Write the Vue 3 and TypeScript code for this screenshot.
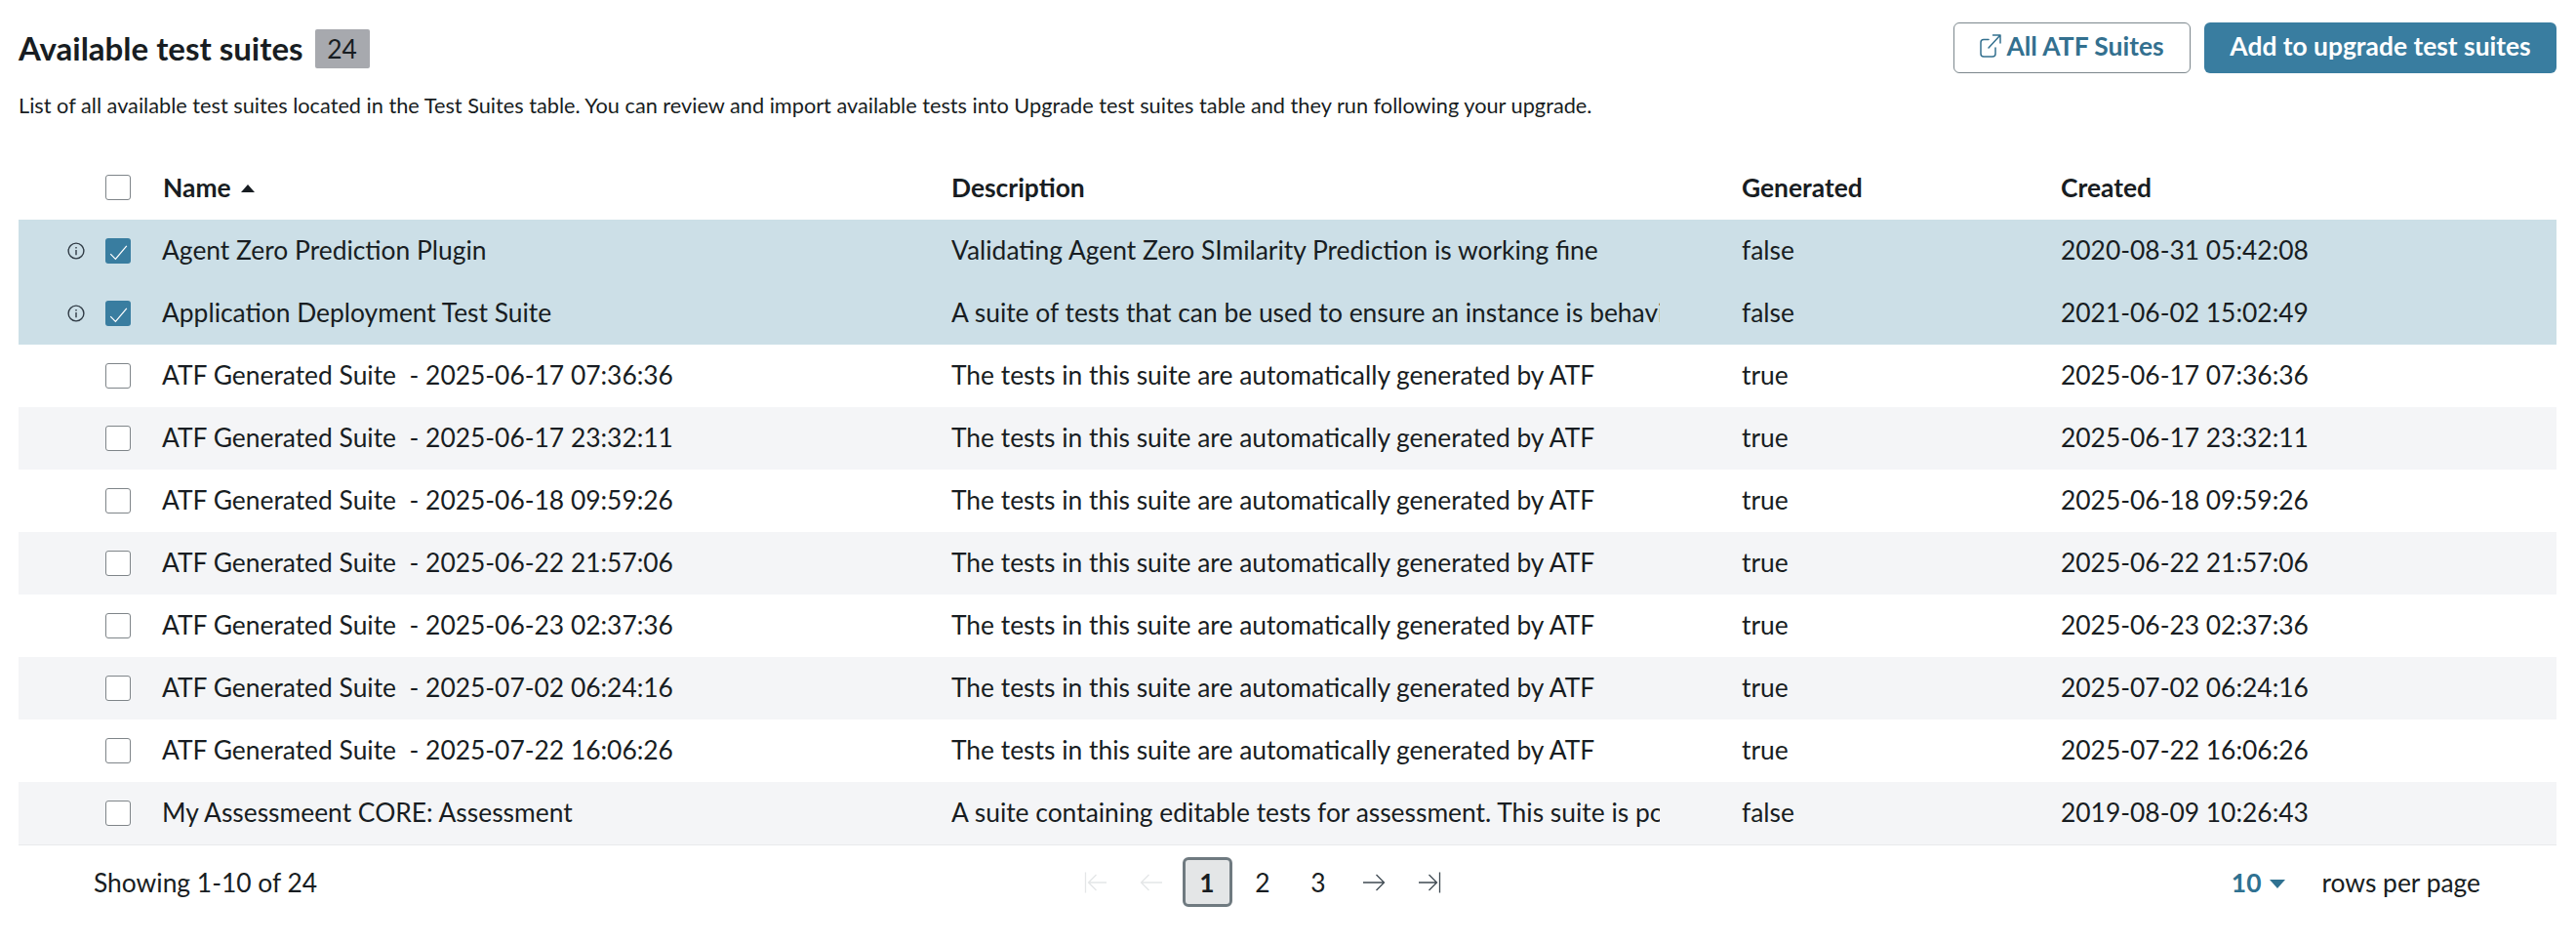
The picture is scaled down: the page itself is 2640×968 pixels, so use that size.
<script setup lang="ts">
interface Suite {
  name: string
  description: string
  generated: string
  created: string
  selected?: boolean
}

const atf = 'The tests in this suite are automatically generated by ATF'
const atfDates = [
  '2025-06-17 07:36:36',
  '2025-06-17 23:32:11',
  '2025-06-18 09:59:26',
  '2025-06-22 21:57:06',
  '2025-06-23 02:37:36',
  '2025-07-02 06:24:16',
  '2025-07-22 16:06:26',
]

const suites: Suite[] = [
  {
    name: 'Agent Zero Prediction Plugin',
    description: 'Validating Agent Zero SImilarity Prediction is working fine',
    generated: 'false',
    created: '2020-08-31 05:42:08',
    selected: true,
  },
  {
    name: 'Application Deployment Test Suite',
    description: 'A suite of tests that can be used to ensure an instance is behaving as expected',
    generated: 'false',
    created: '2021-06-02 15:02:49',
    selected: true,
  },
  ...atfDates.map((d) => ({
    name: `ATF Generated Suite\u00a0 - ${d}`,
    description: atf,
    generated: 'true',
    created: d,
  })),
  {
    name: 'My Assessmeent CORE: Assessment',
    description: 'A suite containing editable tests for assessment. This suite is powered by CORE',
    generated: 'false',
    created: '2019-08-09 10:26:43',
  },
]
</script>

<template>
  <div class="page">
    <header class="top">
      <div class="heading">
        <h1>Available test suites</h1>
        <span class="count">24</span>
      </div>
      <div class="actions">
        <button class="btn btn-outline">
          <svg width="22" height="24" viewBox="0 0 22 24" fill="none" stroke="currentColor" stroke-width="1.500" stroke-linecap="round" stroke-linejoin="round">
            <path d="M9 5.500H4a3 3 0 0 0-3 3V20a3 3 0 0 0 3 3h9a3 3 0 0 0 3-3v-6" />
            <path d="M9 14 20.500 1.500M13.500 1H21v8" />
          </svg>
          All ATF Suites
        </button>
        <button class="btn btn-primary">Add to upgrade test suites</button>
      </div>
    </header>

    <p class="intro">
      List of all available test suites located in the Test Suites table. You can review and import available tests into Upgrade test suites table and they run following your upgrade.
    </p>

    <table class="grid">
      <colgroup>
        <col class="c-info" />
        <col class="c-check" />
        <col class="c-name" />
        <col class="c-desc" />
        <col class="c-gen" />
        <col />
      </colgroup>
      <thead>
        <tr>
          <th></th>
          <th><span class="check"></span></th>
          <th class="th-name">Name <span class="sort"></span></th>
          <th>Description</th>
          <th>Generated</th>
          <th>Created</th>
        </tr>
      </thead>
      <tbody>
        <tr v-for="s in suites" :key="s.name" :class="{ selected: s.selected }">
          <td class="td-info">
            <svg v-if="s.selected" width="18" height="18" viewBox="0 0 18 18" fill="none" stroke="#2f3a44" stroke-width="1.400">
              <circle cx="9" cy="9" r="7.900" />
              <path d="M9 8v5.200" />
              <path d="M9 5v1.400" />
            </svg>
          </td>
          <td class="td-check">
            <span class="check" :class="{ on: s.selected }">
              <svg v-if="s.selected" width="26" height="26" viewBox="0 0 25 25" fill="none" stroke="#fff" stroke-width="1.200">
                <path d="M5 15.500 10 20.500 21 7.500" />
              </svg>
            </span>
          </td>
          <td>{{ s.name }}</td>
          <td><div class="clip">{{ s.description }}</div></td>
          <td>{{ s.generated }}</td>
          <td>{{ s.created }}</td>
        </tr>
      </tbody>
    </table>

    <footer class="pager">
      <div class="showing">Showing 1-10 of 24</div>
      <nav class="pages">
        <button class="page-btn off">
          <svg width="24" height="24" viewBox="0 0 24 24" fill="none" stroke="currentColor" stroke-width="1.300">
            <path d="M1.500 1.500v21M23 12H4.500M12.500 4 4.500 12l8 8" />
          </svg>
        </button>
        <button class="page-btn off">
          <svg width="24" height="24" viewBox="0 0 24 24" fill="none" stroke="currentColor" stroke-width="1.300">
            <path d="M23 12H1.500M9.500 4l-8 8 8 8" />
          </svg>
        </button>
        <button class="page-btn current">1</button>
        <button class="page-btn">2</button>
        <button class="page-btn">3</button>
        <button class="page-btn">
          <svg width="24" height="24" viewBox="0 0 24 24" fill="none" stroke="currentColor" stroke-width="1.300">
            <path d="M1 12h21.500M14.500 4l8 8-8 8" />
          </svg>
        </button>
        <button class="page-btn">
          <svg width="24" height="24" viewBox="0 0 24 24" fill="none" stroke="currentColor" stroke-width="1.300">
            <path d="M1 12h18.500M11.500 4l8 8-8 8M22.500 1.500v21" />
          </svg>
        </button>
      </nav>
      <div class="per-page">
        <span class="size">10 <span class="caret"></span></span>
        <span>rows per page</span>
      </div>
    </footer>
  </div>
</template>

<style scoped>
.page {
  width: 2640px;
  height: 968px;
  box-sizing: border-box;
  padding: 23px 20px 0 19px;
  font-family: Lato, "Liberation Sans", sans-serif;
  color: #181d22;
  background: #fff;
  overflow: hidden;
}

.top {
  display: flex;
  justify-content: space-between;
  align-items: center;
  height: 52px;
}

.heading {
  display: flex;
  align-items: center;
  gap: 12px;
}

h1 {
  margin: 0;
  font-size: 33px;
  font-weight: 700;
  line-height: 40px;
}

.count {
  width: 56px;
  height: 40px;
  margin-top: 1px;
  border-radius: 2px;
  background: #a7a9ae;
  font-size: 26.400px;
  line-height: 40px;
  text-align: center;
}

.actions {
  display: flex;
  gap: 14px;
}

.btn {
  height: 52px;
  box-sizing: border-box;
  padding: 0 0 4px;
  border-radius: 6px;
  font-family: inherit;
  font-size: 26.400px;
  font-weight: 700;
  display: flex;
  align-items: center;
  justify-content: center;
}

.btn-outline {
  width: 243px;
  gap: 5px;
  border: 1px solid #7c878d;
  background: #fff;
  color: #33708f;
}

.btn-primary {
  width: 361px;
  border: 0;
  background: #397da0;
  color: #fff;
}

.intro {
  margin: 18px 0 0;
  font-size: 21.730px;
  line-height: 30px;
  white-space: nowrap;
}

.grid {
  width: 2601px;
  margin-top: 37px;
  border-collapse: collapse;
  table-layout: fixed;
  font-size: 26.400px;
}

.c-info { width: 73px; }
.c-check { width: 74px; }
.c-name { width: 809px; }
.c-desc { width: 810px; }
.c-gen { width: 327px; }

th {
  height: 65px;
  box-sizing: border-box;
  padding: 0 0 1px;
  text-align: left;
  font-weight: 700;
}

.th-name {
  padding-left: 1px;
}

.sort {
  display: inline-block;
  margin-left: 4px;
  vertical-align: 5px;
  border: 7px solid transparent;
  border-top: 0;
  border-bottom: 8px solid #181d22;
}

td {
  height: 64px;
  box-sizing: border-box;
  padding: 0 0 2px;
  white-space: nowrap;
}

td.td-check {
  padding-bottom: 0;
}

tbody tr:nth-child(even) {
  background: #f4f5f7;
}

tbody tr.selected {
  background: #ccdfe7;
}

tbody tr:last-child {
  border-bottom: 1px solid #e9eaec;
}

td.td-info {
  padding: 0 0 0 50px;
}

.td-info svg {
  display: block;
}

.check {
  display: block;
  width: 26px;
  height: 26px;
  margin-left: 16px;
  box-sizing: border-box;
  border: 1px solid #7f8589;
  border-radius: 3px;
  background: #fff;
  overflow: hidden;
}

.check.on {
  border: 0;
  background: #397da0;
}

.check svg {
  display: block;
}

.clip {
  width: 726px;
  overflow: hidden;
}

.pager {
  display: grid;
  grid-template-columns: 1078.500px auto 1fr;
  align-items: center;
  height: 76px;
  font-size: 26.400px;
}

.showing {
  padding-left: 77px;
}

.pages {
  display: flex;
  gap: 6px;
}

.page-btn {
  width: 51px;
  height: 51px;
  padding: 0;
  box-sizing: border-box;
  border: 0;
  border-radius: 6px;
  background: none;
  font-family: inherit;
  font-size: 26.400px;
  color: #181d22;
  display: flex;
  align-items: center;
  justify-content: center;
}

.page-btn svg {
  color: #3f4a52;
}

.page-btn.off svg {
  color: #e4e6e7;
}

.page-btn.current {
  border: 3px solid #6f7a80;
  background: #e4e6e7;
  font-weight: 700;
}

.per-page {
  display: flex;
  justify-content: flex-end;
  align-items: center;
  gap: 37px;
  padding-right: 78px;
}

.size {
  color: #2f7191;
  font-weight: 700;
  display: flex;
  align-items: center;
  gap: 9px;
}

.caret {
  display: inline-block;
  margin-top: 3px;
  border: 8px solid transparent;
  border-bottom: 0;
  border-top: 9px solid #2f7191;
}
</style>
